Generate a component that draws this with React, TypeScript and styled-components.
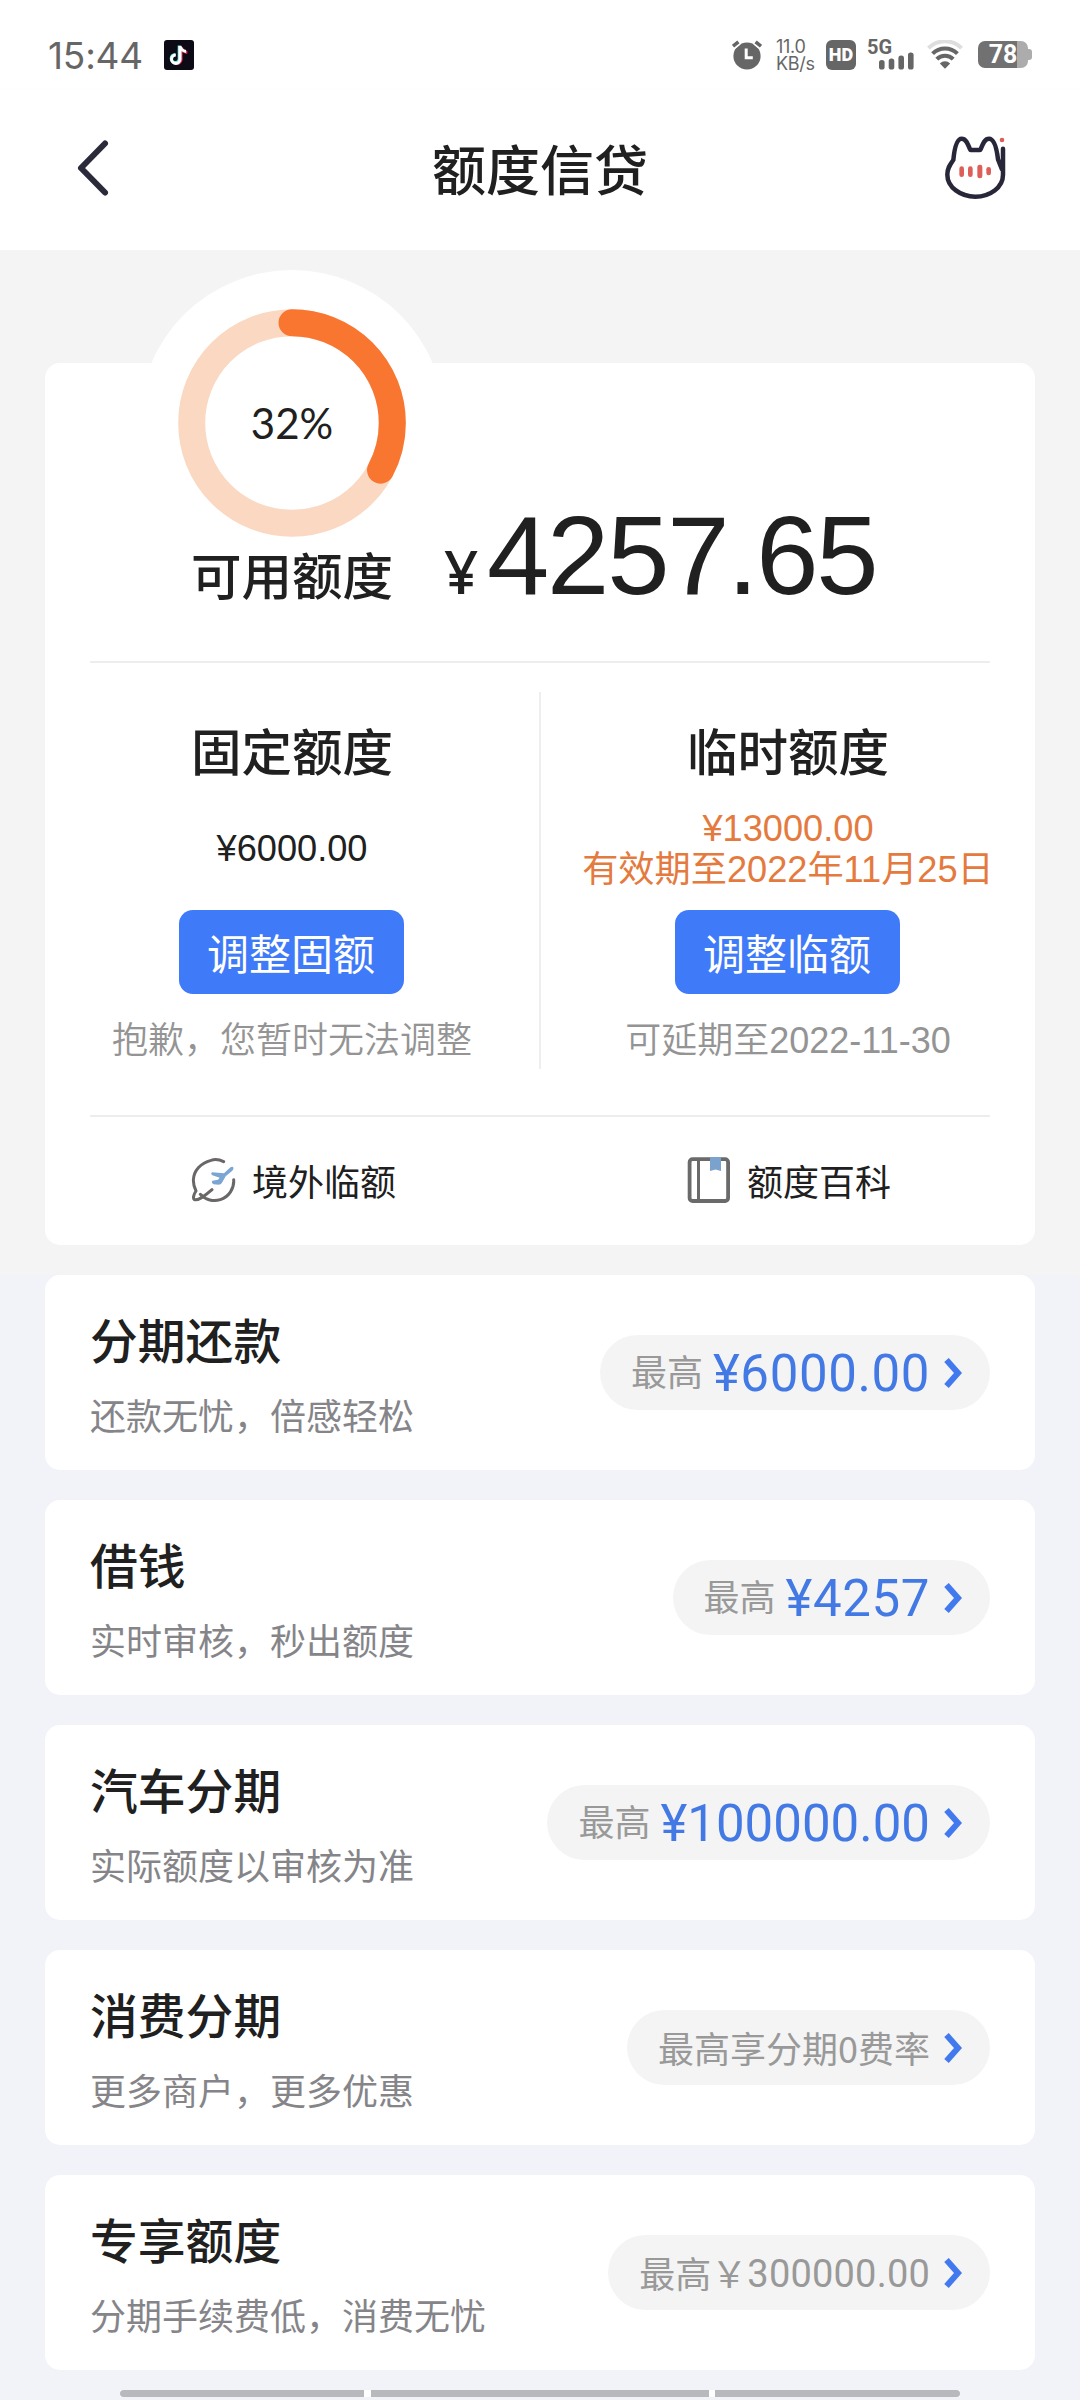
import React from "react";
import styled, { createGlobalStyle } from "styled-components";

const CJK = `"Noto Sans CJK SC", sans-serif`;
const ARIAL = `"Liberation Sans", "Noto Sans CJK SC", sans-serif`;
const ROUND = `Roboto, "Noto Sans CJK SC", sans-serif`;

const GlobalStyle = createGlobalStyle`
  * { box-sizing: border-box; }
  body { margin: 0; background: #f2f3f8; font-family: ${CJK}; color: #202020; }
  svg { display: block; flex: none; }
`;

const Screen = styled.div`
  width: 1080px;
  height: 2400px;
  overflow: hidden;
  display: flex;
  flex-direction: column;
  background: #f2f3f8;
`;

const StatusBar = styled.div`
  height: 90px;
  padding: 19px 48px 0 48px;
  display: flex;
  align-items: center;
  background: #fff;
  color: #666;
  flex: none;
`;
const Clock = styled.span`
  font: 400 37px/36px Inter, sans-serif;
  letter-spacing: -0.2px;
  padding-top: 3px;
  width: 116px;
`;
const StatusIcons = styled.div`
  margin-left: auto;
  display: flex;
  align-items: center;
`;
const Speed = styled.div`
  margin-left: 14px;
  width: 50px;
  font: 400 18px/17px Inter, sans-serif;
  letter-spacing: -0.3px;
  white-space: pre-line;
`;
const Network = styled.div`
  margin-left: 11px;
  width: 50px;
  height: 31px;
  display: grid;
  > * { grid-area: 1 / 1; }
  svg { align-self: end; }
`;
const NetworkLabel = styled.span`
  font: 700 20px/16px Roboto, sans-serif;
`;
const HdBadge = styled.div`
  width: 30px;
  height: 30px;
  border-radius: 6px;
  background: #666;
  color: #fff;
  display: flex;
  align-items: center;
  justify-content: center;
  font: 900 18px/30px Roboto, sans-serif;
`;
const WifiSlot = styled.div`
  margin-left: 10px;
`;
const Battery = styled.div`
  margin-left: 15px;
  display: flex;
  align-items: center;
`;
const BatteryBody = styled.div<{ $level: number }>`
  width: 50px;
  height: 27px;
  border-radius: 7px;
  background: linear-gradient(90deg, #717171 ${(p) => p.$level}%, #acacac ${(p) => p.$level}%);
  color: #fff;
  text-align: center;
  font: 700 25px/28px Roboto, sans-serif;
`;
const BatteryTip = styled.div`
  width: 4px;
  height: 11px;
  border-radius: 0 3px 3px 0;
  background: #acacac;
`;

const NavBar = styled.header`
  height: 160px;
  flex: none;
  background: #fff;
  display: grid;
  grid-template-columns: 160px 1fr 160px;
  align-items: start;
  box-shadow: 0 1px 2px rgba(0, 0, 0, 0.08);
`;
const BackButton = styled.div`
  padding: 48px 0 0 75px;
`;
const Title = styled.h1`
  margin: 0;
  padding-top: 38px;
  text-align: center;
  font: 500 54px/80px ${CJK};
`;
const CatButton = styled.div`
  padding-top: 30px;
`;

const LimitSection = styled.section`
  flex: none;
  height: 1025px;
  padding: 113px 45px 0;
  background: #f4f4f4;
`;
const LimitCard = styled.div`
  position: relative;
  height: 882px;
  border-radius: 15px;
  background: #fff;
  display: flex;
  flex-direction: column;
`;
const Gauge = styled.div`
  position: absolute;
  left: 94px;
  top: -93px;
  width: 306px;
  height: 306px;
  border-radius: 50%;
  background: #fff;
  display: grid;
  place-items: center;
  > * { grid-area: 1 / 1; }
`;
const GaugeText = styled.span`
  font: 400 42px/40px Lato, sans-serif;
  z-index: 1;
`;
const Available = styled.div`
  position: relative;
  height: 300px;
  margin: 0 45px;
  border-bottom: 2px solid #ededed;
  display: flex;
  align-items: flex-end;
`;
const AvailableLabel = styled.div`
  width: 204px;
  margin-left: 101px;
  padding-bottom: 52px;
  font: 500 50.5px/72px ${CJK};
  white-space: nowrap;
`;
const Currency = styled.span`
  margin-left: 49px;
  padding-bottom: 54px;
  width: 43px;
  font: 500 60px/72px "Noto Sans", sans-serif;
`;
const Amount = styled.span`
  padding-bottom: 49px;
  font: 400 112px/112px ${ARIAL};
  letter-spacing: -2.2px;
`;
const Columns = styled.div`
  height: 452px;
  display: grid;
  grid-template-columns: 496px 1fr;
  padding: 29px 0 46px;
`;
const Column = styled.div<{ $divided?: boolean }>`
  display: flex;
  flex-direction: column;
  align-items: center;
  border-right: ${(p) => (p.$divided ? "2px solid #eee" : "0")};
  white-space: nowrap;
`;
const ColumnTitle = styled.h2`
  margin: 0;
  padding-top: 21px;
  font: 500 50.5px/72px ${CJK};
`;
const ColumnValue = styled.div<{ $accent?: boolean }>`
  height: 125px;
  display: flex;
  flex-direction: column;
  align-items: center;
  justify-content: center;
  padding-top: 2px;
  font: 400 36.2px/41px ${ARIAL};
  color: ${(p) => (p.$accent ? "#e47a3e" : "#202020")};
`;
const AdjustButton = styled.button`
  width: 225px;
  height: 84px;
  margin-right: 2px;
  border: 0;
  padding: 0;
  border-radius: 14px;
  background: #3f7af9;
  color: #fff;
  font: 400 42px/80px ${CJK};
`;
const Hint = styled.div`
  margin-top: 21px;
  font: 350 36px/52px ${ARIAL};
  color: #949494;
`;
const Links = styled.div`
  flex: 1;
  margin: 0 45px;
  padding-bottom: 2px;
  border-top: 2px solid #ededed;
  display: grid;
  grid-template-columns: 1fr 1fr;
  align-items: center;
`;
const LinkItem = styled.div<{ $indent: number; $gap: number }>`
  padding-left: ${(p) => p.$indent}px;
  display: flex;
  align-items: center;
  gap: ${(p) => p.$gap}px;
  font: 400 36px/50px ${CJK};
`;

const ProductList = styled.main`
  flex: none;
  display: flex;
  flex-direction: column;
  gap: 30px;
  padding: 0 45px;
`;
const ProductCard = styled.article`
  height: 195px;
  border-radius: 15px;
  background: #fff;
  display: flex;
  justify-content: space-between;
  padding: 0 45px;
`;
const ProductText = styled.div`
  display: flex;
  flex-direction: column;
  white-space: nowrap;
`;
const ProductName = styled.h3`
  margin: 0;
  padding-top: 30px;
  font: 500 47.8px/68px ${CJK};
`;
const ProductDesc = styled.p`
  margin: 0;
  padding-top: 15px;
  font: 400 36px/52px ${CJK};
  color: #858589;
`;
const Pill = styled.div`
  align-self: flex-start;
  margin-top: 60px;
  height: 75px;
  border-radius: 38px;
  background: #f4f4f4;
  padding: 0 26px 0 31px;
  display: flex;
  align-items: center;
  white-space: nowrap;
`;
const PillLabel = styled.span<{ $raised: boolean }>`
  font: 400 36px/70px ${CJK};
  padding-bottom: ${(p) => (p.$raised ? 5 : 2)}px;
  color: #999;
`;
const PillAmount = styled.span<{ $tracking: number }>`
  margin-left: 10px;
  padding-top: 2px;
  font: 400 51px/73px ${ROUND};
  letter-spacing: ${(p) => p.$tracking}px;
  color: #4379e4;
`;
const PillNumber = styled.span`
  padding-top: 3px;
  font: 400 38px/72px ${ROUND};
  letter-spacing: 0.2px;
  color: #999;
`;
const PillArrow = styled.div`
  margin-left: 12px;
`;

const HomeBar = styled.div`
  margin: 20px 120px 0;
  display: grid;
  grid-template-columns: 244px 338px 245px;
  column-gap: 6.5px;
  height: 7px;
  background: #fff;
`;
const HomeSegment = styled.div<{ $radius: string }>`
  background: #b8b9bc;
  border-radius: ${(p) => p.$radius};
`;

const TikTokIcon = () => (
  <svg width="30" height="30" viewBox="0 0 30 30">
    <rect width="30" height="30" rx="3" fill="#0c0a14" />
    <g fill="none" strokeWidth="3">
      <path d="M15.2 5.5v13a4 4 0 1 1-4-4" stroke="#5fe6e6" />
      <path d="M17 7v13a4 4 0 0 1-5 3.4M17.5 7.5c.8 3.2 2.6 4.8 5.8 5" stroke="#e8305c" />
      <path d="M16 6v13.3a4.2 4.2 0 1 1-4.2-4.2M16 6c.8 3.4 2.8 5 6 5.4" stroke="#fff" />
    </g>
  </svg>
);

const AlarmIcon = () => (
  <svg width="30" height="30" viewBox="0 0 30 30">
    <circle cx="15" cy="16" r="13.6" fill="#666" />
    <path d="M1.2 6.2 6.4 1.8M28.8 6.2 23.6 1.8" stroke="#fff" strokeWidth="7" />
    <path d="M1 6.2 6.4 1.8M29 6.2 23.6 1.8" stroke="#666" strokeWidth="3.6" />
    <path d="M14.2 8.5v9.2h6.6" fill="none" stroke="#fff" strokeWidth="3" />
  </svg>
);

const SignalIcon = () => (
  <svg width="47" height="18" viewBox="0 0 47 18">
    <g fill="#666">
      <rect x="12" y="8" width="5.6" height="9.5" rx="2.6" />
      <rect x="21.7" y="6.5" width="5.6" height="11" rx="2.6" />
      <rect x="31.4" y="3.6" width="5.6" height="13.9" rx="2.6" />
      <rect x="41" y="0.6" width="5.6" height="16.9" rx="2.6" />
    </g>
  </svg>
);

const WifiIcon = () => (
  <svg width="36" height="30" viewBox="0 0 36 30">
    <g fill="none" strokeWidth="4">
      <path d="M1.4 8.2a23.5 23.5 0 0 1 33.2 0" stroke="#dedede" />
      <path d="M5.6 13.6a17.5 17.5 0 0 1 24.8 0" stroke="#666" />
      <path d="M9.8 19.2a11.4 11.4 0 0 1 16.4 0" stroke="#666" />
    </g>
    <path d="M12.8 23.4a7.6 7.6 0 0 1 10.4 0L18 28.8z" fill="#666" />
  </svg>
);

const BackIcon = () => (
  <svg width="36" height="60" viewBox="0 0 36 60">
    <path d="M30 5.5 6 30l24 24.5" fill="none" stroke="#2b2a3a" strokeWidth="6" strokeLinecap="round" strokeLinejoin="round" />
  </svg>
);

const CatIcon = () => (
  <svg width="110" height="90" viewBox="0 0 330 270">
    <path
      d="M150 88C142 66 136 56 125 56C112 56 104 78 100 120C90 134 82 144 82 164C82 202 122 230 166 230C210 230 249 202 249 164V86M182 88C190 66 196 56 207 56C222 56 230 84 234 118C238 128 242 138 246 148M152 90H180"
      fill="none" stroke="#28273a" strokeWidth="13.5" strokeLinecap="round" strokeLinejoin="round"
    />
    <g fill="#dc5f5a">
      <rect x="118" y="139" width="14" height="32" rx="7" />
      <rect x="144" y="139" width="14" height="32" rx="7" />
      <rect x="172" y="134" width="15" height="41" rx="7" />
      <rect x="199" y="141" width="14" height="25" rx="7" />
      <circle cx="246" cy="60" r="7" />
    </g>
  </svg>
);

const GlobePlaneIcon = () => (
  <svg width="46" height="46" viewBox="20 36 138 138">
    <path
      d="M118 50C106 44 92 42 80 46C50 54 28 76 27 106C27 118 30 128 35 138C28 148 25 160 30 164C42 168 62 152 83 134M48 148C64 166 88 170 108 164C134 156 150 130 148 104"
      fill="none" stroke="#6a6767" strokeWidth="9" strokeLinecap="round" strokeLinejoin="round"
    />
    <path d="M146 66C149 70 147 74 143 78L124 94L113 113Q110 119 102 119L88 118Q80 113 84 107L101 104L106 98L84 91Q78 86 83 82L119 85L136 69Q142 64 146 66Z" fill="#7ba5d3" />
  </svg>
);

const BookIcon = () => (
  <svg width="44" height="48" viewBox="0 0 44 48">
    <rect x="2.6" y="3.2" width="38.5" height="41.8" rx="3" fill="none" stroke="#6a6a6a" strokeWidth="3.8" />
    <path d="M11.5 3v42" stroke="#6a6a6a" strokeWidth="3" />
    <path d="M23 1h11v14l-5.5-1.500L23 15z" fill="#7aa2cc" />
  </svg>
);

const ArrowIcon = () => (
  <svg width="22" height="34" viewBox="0 0 22 34">
    <path d="M4.5 4 16 17 4.5 30" fill="none" stroke="#4379ee" strokeWidth="6" />
  </svg>
);

const RADIUS = 100.3;
const CIRCUMFERENCE = 2 * Math.PI * RADIUS;

const GaugeRing = ({ ratio }: { ratio: number }) => (
  <svg width="240" height="240" viewBox="0 0 240 240">
    <g fill="none" strokeWidth="27" transform="rotate(-90 120 120)">
      <circle cx="120" cy="120" r={RADIUS} stroke="#fad8c2" />
      <circle cx="120" cy="120" r={RADIUS} stroke="#f97631" strokeLinecap="round" strokeDasharray={`${CIRCUMFERENCE * ratio} ${CIRCUMFERENCE}`} />
    </g>
  </svg>
);

type Product = { name: string; desc: string; label: string; amount?: string; tracking?: number; number?: string };

const products: Product[] = [
  { name: "分期还款", desc: "还款无忧，倍感轻松", label: "最高", amount: "¥6000.00", tracking: 0.6 },
  { name: "借钱", desc: "实时审核，秒出额度", label: "最高", amount: "¥4257", tracking: 0.6 },
  { name: "汽车分期", desc: "实际额度以审核为准", label: "最高", amount: "¥100000.00", tracking: 0 },
  { name: "消费分期", desc: "更多商户，更多优惠", label: "最高享分期0费率" },
  { name: "专享额度", desc: "分期手续费低，消费无忧", label: "最高￥", number: "300000.00" },
];

export default function App() {
  return (
    <Screen lang="zh-CN">
      <GlobalStyle />
      <StatusBar>
        <Clock>15:44</Clock>
        <TikTokIcon />
        <StatusIcons>
          <AlarmIcon />
          <Speed>{"11.0\nKB/s"}</Speed>
          <HdBadge>HD</HdBadge>
          <Network>
            <NetworkLabel>5G</NetworkLabel>
            <SignalIcon />
          </Network>
          <WifiSlot><WifiIcon /></WifiSlot>
          <Battery>
            <BatteryBody $level={78}>78</BatteryBody>
            <BatteryTip />
          </Battery>
        </StatusIcons>
      </StatusBar>
      <NavBar>
        <BackButton><BackIcon /></BackButton>
        <Title>额度信贷</Title>
        <CatButton><CatIcon /></CatButton>
      </NavBar>
      <LimitSection>
        <LimitCard>
          <Gauge>
            <GaugeRing ratio={0.3275} />
            <GaugeText>32%</GaugeText>
          </Gauge>
          <Available>
            <AvailableLabel>可用额度</AvailableLabel>
            <Currency>¥</Currency>
            <Amount>4257.65</Amount>
          </Available>
          <Columns>
            <Column $divided>
              <ColumnTitle>固定额度</ColumnTitle>
              <ColumnValue>¥6000.00</ColumnValue>
              <AdjustButton>调整固额</AdjustButton>
              <Hint>抱歉，您暂时无法调整</Hint>
            </Column>
            <Column>
              <ColumnTitle>临时额度</ColumnTitle>
              <ColumnValue $accent>
                <span>¥13000.00</span>
                <span>有效期至2022年11月25日</span>
              </ColumnValue>
              <AdjustButton>调整临额</AdjustButton>
              <Hint>可延期至2022-11-30</Hint>
            </Column>
          </Columns>
          <Links>
            <LinkItem $indent={101} $gap={15}><GlobePlaneIcon />境外临额</LinkItem>
            <LinkItem $indent={147} $gap={16}><BookIcon />额度百科</LinkItem>
          </Links>
        </LimitCard>
      </LimitSection>
      <ProductList>
        {products.map((p) => (
          <ProductCard key={p.name}>
            <ProductText>
              <ProductName>{p.name}</ProductName>
              <ProductDesc>{p.desc}</ProductDesc>
            </ProductText>
            <Pill>
              <PillLabel $raised={Boolean(p.amount)}>{p.label}</PillLabel>
              {p.amount && <PillAmount $tracking={p.tracking ?? 0}>{p.amount}</PillAmount>}
              {p.number && <PillNumber>{p.number}</PillNumber>}
              <PillArrow><ArrowIcon /></PillArrow>
            </Pill>
          </ProductCard>
        ))}
      </ProductList>
      <HomeBar>
        <HomeSegment $radius="4px 0 0 4px" />
        <HomeSegment $radius="0" />
        <HomeSegment $radius="0 4px 4px 0" />
      </HomeBar>
    </Screen>
  );
}
